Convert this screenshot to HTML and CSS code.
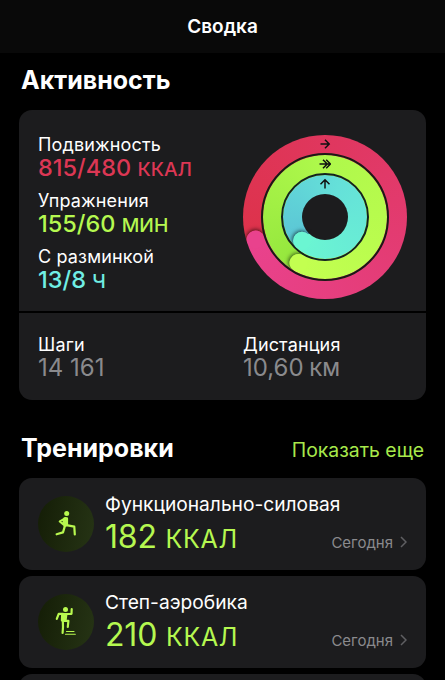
FILE: index.html
```html
<!DOCTYPE html>
<html lang="ru">
<head>
    <meta charset="UTF-8">
    <title>Сводка</title>
    <link rel="stylesheet" href="styles.css">
</head>
<body>
<div class="header">Сводка</div>
<div class="container">
    <h1 class="title">Активность</h1>
    <div class="card activity">
        <div class="summary">
            <div class="goals">
                <div class="label">Подвижность</div>
                <div class="value move">815/480 <span class="unit">ккал</span></div>
                <div class="label">Упражнения</div>
                <div class="value exercise">155/60 <span class="unit">мин</span></div>
                <div class="label">С разминкой</div>
                <div class="value stand">13/8 <span class="unit">ч</span></div>
            </div>
            <div class="ring ring-move">
                <div class="head"></div>
                <svg class="arrow" width="12" height="12" viewBox="0 0 12 12"><path d="M1.5 6H10M6 1.8L10.2 6 6 10.2"/></svg>
                <div class="ring ring-exercise">
                    <div class="head"></div>
                    <svg class="arrow" width="12" height="12" viewBox="0 0 12 12"><path d="M.5 6H11M4 1.8L8.2 6 4 10.2M7.2 1.8L11.4 6 7.2 10.2"/></svg>
                    <div class="ring ring-stand">
                        <div class="head"></div>
                        <svg class="arrow" width="12" height="12" viewBox="0 0 12 12"><path d="M6 10.5V2M1.5 6.3L6 1.8l4.5 4.5"/></svg>
                        <div class="hole"></div>
                    </div>
                </div>
            </div>
        </div>
        <div class="totals">
            <div class="total">
                <div class="label">Шаги</div>
                <div class="value">14 161</div>
            </div>
            <div class="total">
                <div class="label">Дистанция</div>
                <div class="value">10,60 <span class="unit">км</span></div>
            </div>
        </div>
    </div>
    <div class="section-head">
        <h1 class="title">Тренировки</h1>
        <a class="more" href="#">Показать еще</a>
    </div>
    <div class="card workout">
        <div class="icon">
            <svg width="56" height="56" viewBox="0 0 56 56">
                <circle class="fill" cx="28.7" cy="17.4" r="2.5"/>
                <path class="fill" d="M26.4 22.4h2.6v6.8l-2.4.6-1-3z"/>
                <path d="M27.6 22.2l-5.8 3.2 3.6 2.9M28.4 29.2l7.9 1.5.5 7.8M27 29.6L25 36.4l-6.4 1.9"/>
            </svg>
        </div>
        <div class="info">
            <div class="name">Функционально-силовая</div>
            <div class="energy">182 <span class="unit">ккал</span></div>
        </div>
        <div class="date">Сегодня <svg width="7" height="12" viewBox="0 0 7 12"><path d="M1 1l5 5-5 5"/></svg></div>
    </div>
    <div class="card workout">
        <div class="icon">
            <svg width="56" height="56" viewBox="0 0 56 56">
                <circle class="fill" cx="27.5" cy="15.6" r="2.5"/>
                <path class="fill" d="M24.2 20h4.2l-.9 6.5h-3.6z"/>
                <path d="M25 19.9h-4.3l-1.9 5M28.3 20l5.2-.2.2-4.6M24.8 26l.2 7-.4 6M26.5 26.8h3.9l-.6 6.2"/>
                <path class="step" d="M28.5 37.5h7.5M27.5 40.3h9.8"/>
            </svg>
        </div>
        <div class="info">
            <div class="name">Степ-аэробика</div>
            <div class="energy">210 <span class="unit">ккал</span></div>
        </div>
        <div class="date">Сегодня <svg width="7" height="12" viewBox="0 0 7 12"><path d="M1 1l5 5-5 5"/></svg></div>
    </div>
    <div class="card workout"></div>
</div>
</body>
</html>
```
FILE: styles.css
```css
body {
    margin: 0;
    height: 680px;
    overflow: hidden;
    background-color: #000000;
    color: #ffffff;
    font-family: Inter, "Noto Sans", sans-serif;
}

.header {
    height: 53px;
    line-height: 53px;
    background-color: #090909;
    font-size: 19px;
    font-weight: 600;
    text-align: center;
}

.container {
    height: 627px;
    padding: 0 19px;
    overflow: hidden;
}

.title {
    margin: 0;
    padding: 11px 3px 0 2px;
    height: 46px;
    line-height: 32px;
    font-size: 25px;
    font-weight: 700;
}

.card {
    background-color: #1c1c1e;
    border-radius: 13px;
}

.summary {
    display: flex;
    justify-content: space-between;
    height: 176px;
    padding: 25px 19px 0;
}

.goals {
    margin-top: -1px;
}

.label {
    height: 22px;
    line-height: 22px;
    font-size: 18px;
    letter-spacing: .15px;
    white-space: nowrap;
}

.value {
    height: 34px;
    line-height: 24px;
    font-size: 24px;
    white-space: nowrap;
}

.goals .value {
    line-height: 23px;
    font-size: 23.5px;
    font-weight: 500;
}

.unit {
    margin-left: -1px;
    font-size: 19px;
    font-weight: 500;
    text-transform: uppercase;
}

.goals .unit {
    margin-left: 0;
    font-size: 19.3px;
}

.move {
    color: #dc3754;
}

.exercise {
    color: #b5f850;
}

.stand {
    color: #70eee4;
}

/* rings */
.ring {
    position: relative;
    display: grid;
    place-items: center;
    flex: none;
    box-sizing: border-box;
    border-radius: 50%;
    overflow: hidden;
}

.ring > * {
    grid-area: 1 / 1;
}

.ring-move {
    width: 164px;
    height: 164px;
    background: conic-gradient(from 252deg, #dd324a, #e13968 45%, #e9428d);
}

.ring-exercise {
    width: 128px;
    height: 128px;
    border: 2px solid #1b1a16;
    background: conic-gradient(from 210deg, #94e63d, #aef84b 40%, #c3ff50) padding-box;
}

.ring-stand {
    width: 88px;
    height: 88px;
    border: 2px solid #142220;
    background: conic-gradient(from 224deg, #5bc4d5, #65e1d9 45%, #6bf6d2) padding-box;
}

.hole {
    width: 46px;
    height: 46px;
    border-radius: 50%;
    background-color: #1c1c1e;
}

.head {
    position: absolute;
    inset: 0;
}

.head:before,
.head:after {
    content: '';
    position: absolute;
    top: 0;
    left: calc(50% - 9px);
    width: 18px;
    height: 18px;
    border-radius: 50%;
}

/* shadow only in front of the rounded end */
.head:before {
    box-shadow: 1px 0 4px rgba(0, 0, 0, .7);
    clip-path: inset(-10px -10px -10px 9px);
}

.ring-move > .head {
    transform: rotate(252deg);
}

.ring-move > .head:after {
    background-color: #e9428d;
}

.ring-exercise > .head {
    transform: rotate(210deg);
}

.ring-exercise > .head:after {
    background-color: #c3ff50;
}

.ring-stand > .head {
    transform: rotate(224deg);
}

.ring-stand > .head:after {
    background-color: #6bf6d2;
}

.arrow {
    align-self: start;
    margin-top: 3px;
    z-index: 1;
    fill: none;
    stroke: #111111;
    stroke-width: 1.5;
}

.totals {
    display: flex;
    height: 61px;
    padding: 21px 19px 5px;
    border-top: 2px solid #000000;
}

.total {
    flex: none;
    width: 205px;
}

.total:last-child {
    width: 160px;
}

.totals .value {
    color: #8a8a8d;
}

.section-head {
    display: flex;
    justify-content: space-between;
    padding-top: 21px;
}

.more {
    padding: 13px 2px 0 0;
    line-height: 32px;
    color: #a8e94b;
    font-size: 19.4px;
    text-decoration: none;
}

/* workouts */
.workout {
    display: flex;
    box-sizing: border-box;
    height: 92px;
    margin-bottom: 6px;
    padding: 18px 19px 0;
}

.icon {
    flex: none;
    width: 56px;
    height: 56px;
    border-radius: 50%;
    background: linear-gradient(100deg, #141d06, #263415);
}

.icon path {
    fill: none;
    stroke: #b8f84f;
    stroke-width: 2.2;
    stroke-linecap: round;
    stroke-linejoin: round;
}

.icon .fill {
    fill: #b8f84f;
}

.icon .step {
    stroke-width: 1.1;
}

.info {
    flex: 1;
    min-width: 0;
    padding-left: 11px;
}

.name {
    margin-top: -4px;
    height: 25px;
    line-height: 24px;
    font-size: 19.2px;
    white-space: nowrap;
}

.energy {
    line-height: 40px;
    color: #b5f850;
    font-size: 32px;
    font-weight: 400;
    letter-spacing: -.2px;
    white-space: nowrap;
}

.energy .unit {
    margin-left: 0;
    font-size: 25px;
    font-weight: 400;
    letter-spacing: .7px;
}

.date {
    display: flex;
    flex: none;
    align-items: center;
    gap: 7px;
    height: 20px;
    padding-top: 36px;
    color: #8a8a8d;
    font-size: 15px;
}

.date path {
    fill: none;
    stroke: #5f5f62;
    stroke-width: 1.5;
}
```
